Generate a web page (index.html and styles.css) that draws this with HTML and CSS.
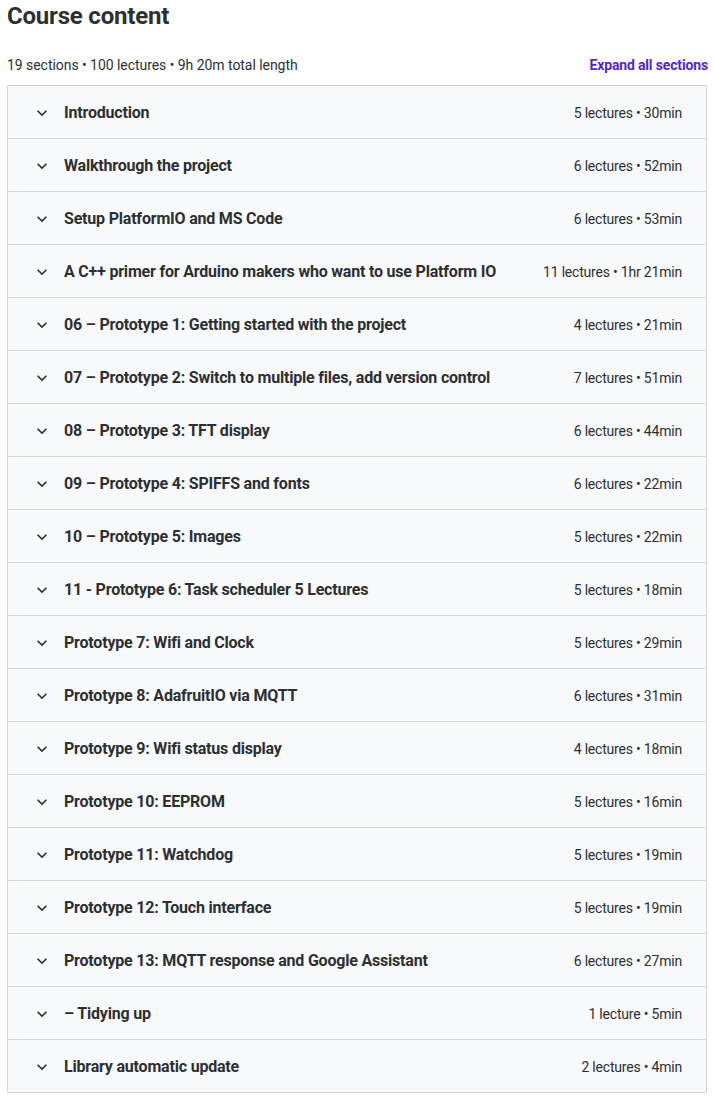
FILE: index.html
```html
<!DOCTYPE html>
<html lang="en">

<head>
    <meta charset="UTF-8">
    <meta name="viewport" content="width=device-width, initial-scale=1.0">
    <title>Course content</title>
    <link rel="stylesheet" href="styles.css">
</head>

<body>
    <div id="wrapper">
        <h2 id="heading">Course content</h2>
        <div id="meta">
            <span>19 sections • 100 lectures • 9h 20m total length</span>
            <a href="#" id="expand">Expand all sections</a>
        </div>
        <div id="sections">
            <div class="section"><svg class="chevron" viewBox="0 0 24 24"><path d="M16.59 8.59L12 13.17 7.41 8.59 6 10l6 6 6-6z"/></svg><span class="title">Introduction</span><span class="info">5 lectures • 30min</span></div>
            <div class="section"><svg class="chevron" viewBox="0 0 24 24"><path d="M16.59 8.59L12 13.17 7.41 8.59 6 10l6 6 6-6z"/></svg><span class="title">Walkthrough the project</span><span class="info">6 lectures • 52min</span></div>
            <div class="section"><svg class="chevron" viewBox="0 0 24 24"><path d="M16.59 8.59L12 13.17 7.41 8.59 6 10l6 6 6-6z"/></svg><span class="title">Setup PlatformIO and MS Code</span><span class="info">6 lectures • 53min</span></div>
            <div class="section"><svg class="chevron" viewBox="0 0 24 24"><path d="M16.59 8.59L12 13.17 7.41 8.59 6 10l6 6 6-6z"/></svg><span class="title">A C++ primer for Arduino makers who want to use Platform IO</span><span class="info">11 lectures • 1hr 21min</span></div>
            <div class="section"><svg class="chevron" viewBox="0 0 24 24"><path d="M16.59 8.59L12 13.17 7.41 8.59 6 10l6 6 6-6z"/></svg><span class="title">06 – Prototype 1: Getting started with the project</span><span class="info">4 lectures • 21min</span></div>
            <div class="section"><svg class="chevron" viewBox="0 0 24 24"><path d="M16.59 8.59L12 13.17 7.41 8.59 6 10l6 6 6-6z"/></svg><span class="title">07 – Prototype 2: Switch to multiple files, add version control</span><span class="info">7 lectures • 51min</span></div>
            <div class="section"><svg class="chevron" viewBox="0 0 24 24"><path d="M16.59 8.59L12 13.17 7.41 8.59 6 10l6 6 6-6z"/></svg><span class="title">08 – Prototype 3: TFT display</span><span class="info">6 lectures • 44min</span></div>
            <div class="section"><svg class="chevron" viewBox="0 0 24 24"><path d="M16.59 8.59L12 13.17 7.41 8.59 6 10l6 6 6-6z"/></svg><span class="title">09 – Prototype 4: SPIFFS and fonts</span><span class="info">6 lectures • 22min</span></div>
            <div class="section"><svg class="chevron" viewBox="0 0 24 24"><path d="M16.59 8.59L12 13.17 7.41 8.59 6 10l6 6 6-6z"/></svg><span class="title">10 – Prototype 5: Images</span><span class="info">5 lectures • 22min</span></div>
            <div class="section"><svg class="chevron" viewBox="0 0 24 24"><path d="M16.59 8.59L12 13.17 7.41 8.59 6 10l6 6 6-6z"/></svg><span class="title">11 - Prototype 6: Task scheduler 5 Lectures</span><span class="info">5 lectures • 18min</span></div>
            <div class="section"><svg class="chevron" viewBox="0 0 24 24"><path d="M16.59 8.59L12 13.17 7.41 8.59 6 10l6 6 6-6z"/></svg><span class="title">Prototype 7: Wifi and Clock</span><span class="info">5 lectures • 29min</span></div>
            <div class="section"><svg class="chevron" viewBox="0 0 24 24"><path d="M16.59 8.59L12 13.17 7.41 8.59 6 10l6 6 6-6z"/></svg><span class="title">Prototype 8: AdafruitIO via MQTT</span><span class="info">6 lectures • 31min</span></div>
            <div class="section"><svg class="chevron" viewBox="0 0 24 24"><path d="M16.59 8.59L12 13.17 7.41 8.59 6 10l6 6 6-6z"/></svg><span class="title">Prototype 9: Wifi status display</span><span class="info">4 lectures • 18min</span></div>
            <div class="section"><svg class="chevron" viewBox="0 0 24 24"><path d="M16.59 8.59L12 13.17 7.41 8.59 6 10l6 6 6-6z"/></svg><span class="title">Prototype 10: EEPROM</span><span class="info">5 lectures • 16min</span></div>
            <div class="section"><svg class="chevron" viewBox="0 0 24 24"><path d="M16.59 8.59L12 13.17 7.41 8.59 6 10l6 6 6-6z"/></svg><span class="title">Prototype 11: Watchdog</span><span class="info">5 lectures • 19min</span></div>
            <div class="section"><svg class="chevron" viewBox="0 0 24 24"><path d="M16.59 8.59L12 13.17 7.41 8.59 6 10l6 6 6-6z"/></svg><span class="title">Prototype 12: Touch interface</span><span class="info">5 lectures • 19min</span></div>
            <div class="section"><svg class="chevron" viewBox="0 0 24 24"><path d="M16.59 8.59L12 13.17 7.41 8.59 6 10l6 6 6-6z"/></svg><span class="title">Prototype 13: MQTT response and Google Assistant</span><span class="info">6 lectures • 27min</span></div>
            <div class="section"><svg class="chevron" viewBox="0 0 24 24"><path d="M16.59 8.59L12 13.17 7.41 8.59 6 10l6 6 6-6z"/></svg><span class="title">– Tidying up</span><span class="info">1 lecture • 5min</span></div>
            <div class="section"><svg class="chevron" viewBox="0 0 24 24"><path d="M16.59 8.59L12 13.17 7.41 8.59 6 10l6 6 6-6z"/></svg><span class="title">Library automatic update</span><span class="info">2 lectures • 4min</span></div>
        </div>
    </div>
</body>

</html>
```

FILE: styles.css
```css
* {
    box-sizing: border-box;
    font-family: Roboto, "Liberation Sans", sans-serif;
}

body {
    margin: 0;
    background: white;
    color: #2d2f31;
}

#wrapper {
    width: 714px;
    padding: 0 7px;
}

#heading {
    margin: 0;
    font-size: 24px;
    line-height: 32px;
    font-weight: 700;
    letter-spacing: -0.2px;
}

#meta {
    display: flex;
    justify-content: space-between;
    align-items: center;
    margin-top: 23px;
    margin-bottom: 10px;
    font-size: 14px;
    line-height: 20px;
    letter-spacing: -0.05px;
}

#expand {
    color: #5624d0;
    font-weight: 700;
    text-decoration: none;
    letter-spacing: -0.15px;
    margin-right: -1px;
}

#sections {
    border: 1px solid #d1d7dc;
    border-bottom: none;
}

.section {
    display: flex;
    align-items: center;
    padding: 17px 24px 15px;
    background: #f7f9fa;
    border-bottom: 1px solid #d1d7dc;
}

.chevron {
    width: 20px;
    height: 20px;
    fill: #2d2f31;
    flex-shrink: 0;
    margin-right: 12px;
}

.title {
    flex: 1;
    font-size: 16px;
    line-height: 20px;
    font-weight: 700;
    letter-spacing: -0.2px;
}

.info {
    font-size: 14px;
    line-height: 20px;
    margin-left: 16px;
    white-space: nowrap;
    letter-spacing: -0.2px;
}
```
